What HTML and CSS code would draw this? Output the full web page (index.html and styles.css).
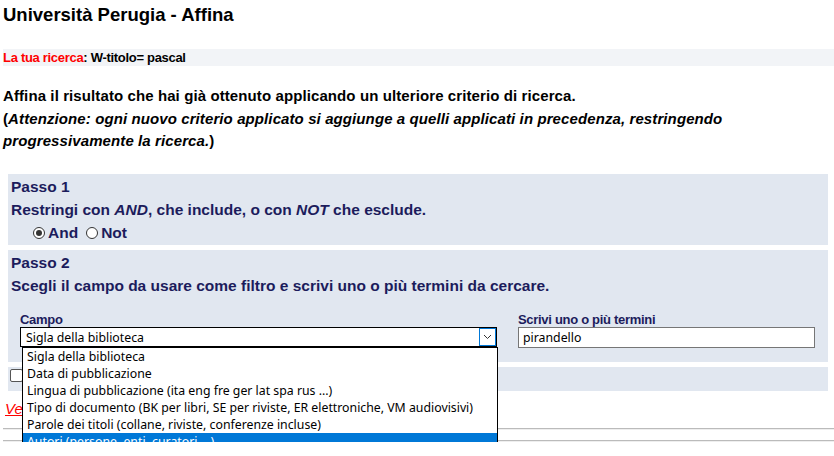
FILE: index.html
```html
<!DOCTYPE html>
<html lang="it">
  <head>
    <meta charset="UTF-8" />
    <title>Università Perugia - Affina</title>
    <link rel="stylesheet" href="styles.css">
  </head>
  <body>
    <h1 class="page-title">Università Perugia - Affina</h1>

    <div class="search-bar">
      <span class="search-label">La tua ricerca</span>: W-titolo= pascal
    </div>

    <p class="intro">
      Affina il risultato che hai già ottenuto applicando un ulteriore criterio di ricerca.<br />
      (<i>Attenzione: ogni nuovo criterio applicato si aggiunge a quelli applicati in precedenza, restringendo
      progressivamente la ricerca.</i>)
    </p>

    <div class="step">
      <div class="step-title">Passo 1</div>
      <div class="step-text">Restringi con <i>AND</i>, che include, o con <i>NOT</i> che esclude.</div>
      <div class="radios">
        <label><span class="radio checked"></span>And</label>
        <label><span class="radio"></span>Not</label>
      </div>
    </div>

    <div class="step step-two">
      <div class="step-title">Passo 2</div>
      <div class="step-text">Scegli il campo da usare come filtro e scrivi uno o più termini da cercare.</div>
      <div class="fields">
        <div class="field field-select">
          <div class="field-label">Campo</div>
          <div class="select">
            <span>Sigla della biblioteca</span>
            <span class="select-arrow">
              <svg width="9" height="6" viewBox="0 0 9 6"><path d="M1 1 L4.5 4.5 L8 1" fill="none" stroke="#333" stroke-width="1"/></svg>
            </span>
            <ul class="options">
              <li>Sigla della biblioteca</li>
              <li>Data di pubblicazione</li>
              <li>Lingua di pubblicazione (ita eng fre ger lat spa rus ...)</li>
              <li>Tipo di documento (BK per libri, SE per riviste, ER elettroniche, VM audiovisivi)</li>
              <li>Parole dei titoli (collane, riviste, conferenze incluse)</li>
              <li class="selected">Autori (persone, enti, curatori ...)</li>
              <li>Soggetti (parole dei soggetti)</li>
            </ul>
          </div>
        </div>
        <div class="field field-input">
          <div class="field-label">Scrivi uno o più termini</div>
          <div class="text-input">pirandello</div>
        </div>
      </div>
    </div>

    <div class="step step-three">
      <span class="checkbox"></span>
    </div>

    <a class="more-link" href="#">Vedi anche</a>
    <hr class="rule" />
    <hr class="rule" />
  </body>
</html>
```

FILE: styles.css
```css
* {
  box-sizing: border-box;
}

body {
  margin: 0;
  padding: 0 0 0 3px;
  font-family: "Liberation Sans", Arial, sans-serif;
  color: #000;
  background: #fff;
}

.page-title {
  font-size: 18.5px;
  font-weight: bold;
  margin: 4px 0 0;
  line-height: 21px;
}

.search-bar {
  margin-top: 24px;
  height: 17px;
  line-height: 17px;
  background: #f2f4f7;
  font-size: 13px;
  font-weight: bold;
  letter-spacing: -0.3px;
}

.search-label {
  color: #ff0000;
}

.intro {
  margin: 19px 0 0;
  max-width: 760px;
  font-size: 15px;
  font-weight: bold;
  line-height: 22.5px;
  letter-spacing: 0.1px;
}

.step {
  margin: 21px 6px 0 5px;
  background: #e1e7f0;
  color: #1c1c5c;
  padding: 1px 0 0 3px;
}

.step + .step {
  margin-top: 5px;
}

.step-title,
.step-text {
  font-size: 15.5px;
  font-weight: bold;
  line-height: 23px;
}

.step-text i {
  font-weight: bold;
}

.radios {
  display: flex;
  gap: 8px;
  padding-left: 22px;
  height: 24px;
  align-items: center;
  font-size: 15.5px;
  font-weight: bold;
}

.radios label {
  display: flex;
  align-items: center;
  gap: 3px;
}

.radio {
  width: 12px;
  height: 12px;
  border: 1px solid #333;
  border-radius: 50%;
  background: #fff;
  display: inline-flex;
  align-items: center;
  justify-content: center;
}

.radio.checked::after {
  content: "";
  width: 6px;
  height: 6px;
  border-radius: 50%;
  background: #333;
}

.step-two {
  height: 112px;
}

.fields {
  display: flex;
  gap: 21px;
  padding: 15px 0 0 9px;
}

.field-label {
  font-size: 13px;
  font-weight: bold;
  line-height: 15px;
  letter-spacing: -0.3px;
}

.field-select {
  width: 477px;
}

.field-input {
  width: 297px;
}

.select,
.text-input {
  position: relative;
  height: 21px;
  background: #fff;
  font-family: "Noto Sans", "DejaVu Sans", sans-serif;
  font-size: 12.3px;
  line-height: 19px;
  color: #000;
  padding-left: 5px;
  font-weight: normal;
}

.select {
  height: 20px;
  border: 1px solid #000;
  display: flex;
  justify-content: space-between;
}

.select-arrow {
  width: 17px;
  height: 18px;
  border: 1px solid #0078d7;
  display: flex;
  align-items: center;
  justify-content: center;
}

.text-input {
  border: 1px solid #767676;
  padding-left: 4px;
}

.options {
  position: absolute;
  left: 1px;
  top: 19px;
  width: 476px;
  margin: 0;
  padding: 0;
  list-style: none;
  background: #fff;
  border: 1px solid #000;
  z-index: 2;
}

.options li {
  height: 17px;
  line-height: 17px;
  padding-left: 4px;
  white-space: nowrap;
}

.options li.selected {
  background: #0078d7;
  color: #fff;
}

.step-three {
  height: 24px;
  padding: 2px 0 0 2px;
}

.checkbox {
  display: block;
  width: 13px;
  height: 13px;
  border: 1px solid #555;
  border-radius: 2px;
  background: #fff;
}

.more-link {
  display: block;
  margin: 9px 0 0 2px;
  font-size: 15px;
  font-style: italic;
  color: #ff0000;
  line-height: 18px;
}

.rule {
  margin: 10px 0 0;
  border: none;
  border-top: 1px solid #bbb;
  border-bottom: 1px solid #eee;
}
```
